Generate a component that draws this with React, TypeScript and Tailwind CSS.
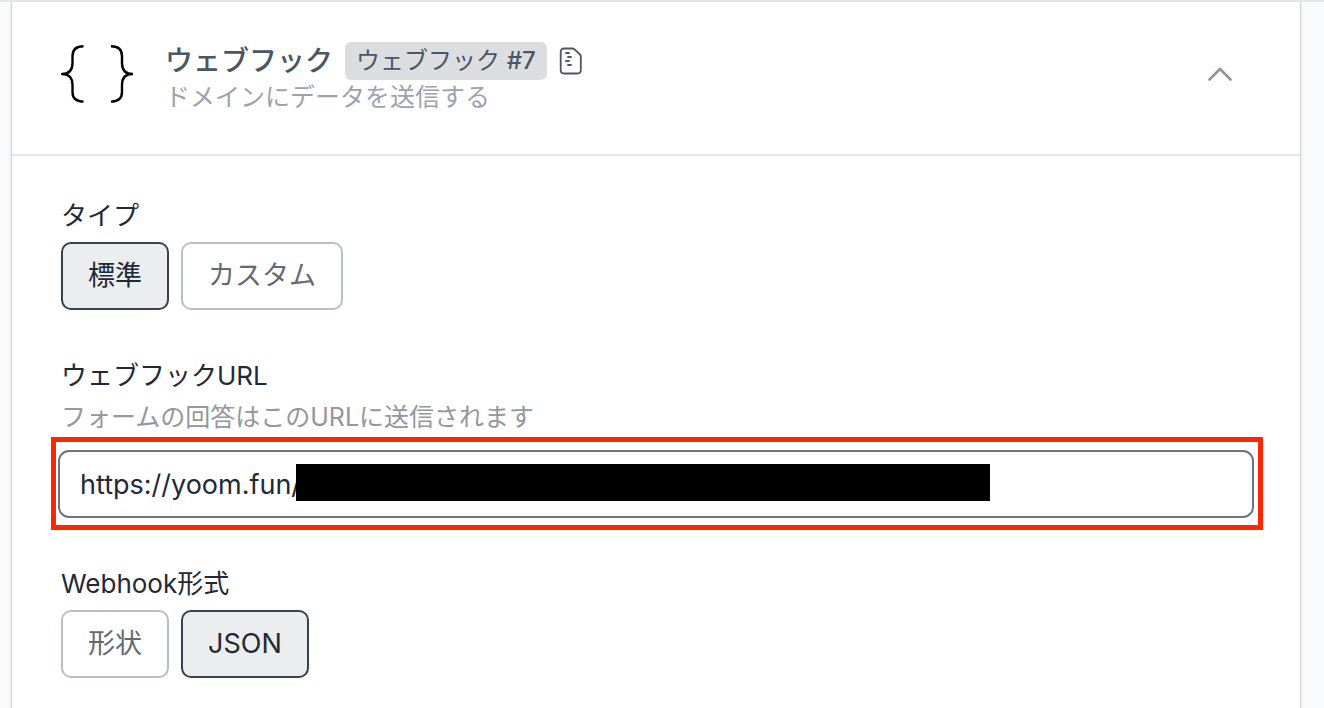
import React, { useState } from "react";
import { clsx } from "clsx";

function BracesIcon() {
  return (
    <svg viewBox="0 0 72 60" className="w-[72px] h-[60px] shrink-0" fill="none" stroke="#000" strokeWidth="2.4" strokeLinejoin="round">
      <path d="M22.500 2.2C15 2.200 11.500 6 11.500 12V19C11.500 25.500 8.500 30 1 30C8.500 30 11.500 34.500 11.500 41V48C11.500 54 15 57.600 22.500 57.600" />
      <path d="M50 2.2C57.500 2.200 61 6 61 12V19C61 25.500 64 30 71.500 30C64 30 61 34.500 61 41V48C61 54 57.500 57.600 50 57.600" />
    </svg>
  );
}

function DocIcon() {
  return (
    <svg viewBox="0 0 24 28" className="w-6 h-7" fill="none" stroke="#4b5563" strokeWidth="1.8" strokeLinecap="round" strokeLinejoin="round">
      <path d="M5 1.500H13.500Q14.500 1.500 15.300 2.200L21 7.500Q21.800 8.300 21.800 9.500V23Q21.800 26.500 18.500 26.500H5Q1.700 26.500 1.700 23V5Q1.700 1.500 5 1.500Z" />
      <path d="M7 6H10M9 10H12M7 14H10M9 18H12" />
    </svg>
  );
}

function OptionButton({ label, active, onClick }: { label: string; active: boolean; onClick: () => void }) {
  return (
    <button
      type="button"
      aria-pressed={active}
      onClick={onClick}
      className={clsx(
        "h-[68px] px-[25px] rounded-[10px] border-2 text-[27px] leading-10",
        active ? "bg-[#ebedef] border-[#374151] text-[#1f2937]" : "bg-white border-[#b9bdc9] text-[#636a74]",
      )}
    >
      {label}
    </button>
  );
}

function OptionGroup({ label, options, initial }: { label: string; options: string[]; initial: string }) {
  const [value, setValue] = useState(initial);

  return (
    <div role="group" aria-label={label}>
      <p className="text-[26px] leading-10 text-[#1f2937]">{label}</p>
      <div className="mt-1.5 flex gap-3">
        {options.map(o => (
          <OptionButton key={o} label={o} active={o === value} onClick={() => setValue(o)} />
        ))}
      </div>
    </div>
  );
}

export default function App() {
  const [open, setOpen] = useState(true);
  const [url, setUrl] = useState("https://yoom.fun/");

  return (
    <div className="min-h-screen flex flex-col bg-[#f8fafc] border-t-2 border-[#e5e7eb] font-['Inter','Noto_Sans_CJK_JP',sans-serif]">
      <section className="grow ml-[11px] mr-[23px] bg-white border-x border-[#d1d5db] shadow-sm">

        {/* Header */}
        <header className={clsx("flex items-center px-[49px] pt-8 pb-10 border-[#e5e7eb]", open && "border-b-2")}>
          <BracesIcon />
          <div className="ml-8 pt-2 grow">
            <div className="flex items-center">
              <h2 className="text-[28px] leading-9 font-medium text-[#4b5563]">ウェブフック</h2>
              <span className="ml-3 h-[38px] px-[11px] rounded-md bg-[#dbdde1] text-2xl leading-[38px] text-[#4b5563]">
                ウェブフック <span className="font-medium">#7</span>
              </span>
              <button type="button" aria-label="ドキュメント" className="ml-3">
                <DocIcon />
              </button>
            </div>
            <p className="text-[25px] leading-[34px] text-[#9ca3af]">ドメインにデータを送信する</p>
          </div>
          <button type="button" aria-label="開閉" aria-expanded={open} onClick={() => setOpen(p => !p)} className="mr-[18px]">
            <svg viewBox="0 0 26 16" className="w-[26px] h-4" fill="none" stroke="#8f959d" strokeWidth="2.6" strokeLinecap="round" strokeLinejoin="round">
              <path d="M2.500 13.500L13 3L23.500 13.500" />
            </svg>
          </button>
        </header>

        {/* Settings */}
        {open && (
          <div className="px-[49px] pt-10">
            <OptionGroup label="タイプ" options={["標準", "カスタム"]} initial="標準" />

            <div className="mt-12">
              <label htmlFor="webhook-url" className="block text-[26px] leading-9 text-[#1f2937]">ウェブフックURL</label>
              <p className="mt-1 text-[25px] leading-[39px] text-[#93979e]">フォームの回答はこのURLに送信されます</p>
              <div className="-ml-[10px] -mr-3 border-5 border-[#ff2600] pt-2 pb-[7px] pl-0.5 pr-1">
                <div className="relative">
                  <input
                    id="webhook-url"
                    type="text"
                    value={url}
                    onChange={e => setUrl(e.target.value)}
                    className="block w-full h-[68px] px-5 rounded-[11px] border-2 border-[#6b7280] bg-white text-[27px] text-[#1f2937] outline-none"
                  />
                  <span className="absolute left-[238px] top-[14px] w-[694px] h-[37px] bg-black" />
                </div>
              </div>
            </div>

            <div className="mt-[34px]">
              <OptionGroup label="Webhook形式" options={["形状", "JSON"]} initial="JSON" />
            </div>
          </div>
        )}
      </section>
    </div>
  );
}
